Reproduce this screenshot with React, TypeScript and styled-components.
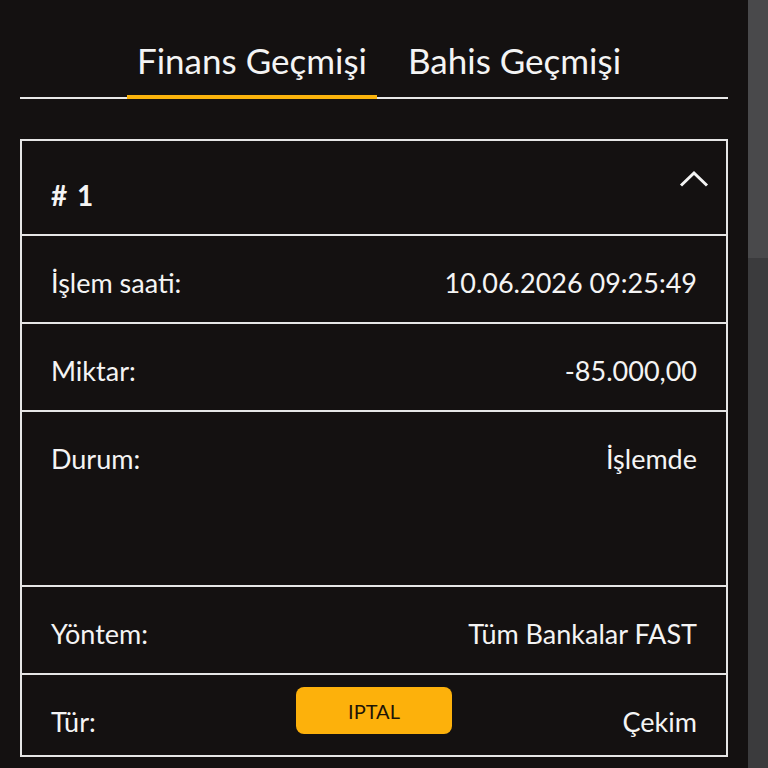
import React from 'react';
import styled, { createGlobalStyle } from 'styled-components';

const GlobalStyle = createGlobalStyle`
  html, body {
    margin: 0;
    padding: 0;
    background: #141111;
    height: 768px;
    overflow: hidden;
  }
  * { box-sizing: border-box; }
`;

const Screen = styled.div`
  display: flex;
  width: 768px;
  height: 768px;
  font-family: Lato, "Open Sans", sans-serif;
  color: #f4f4f4;
`;

const Main = styled.div`
  flex: 1;
  padding: 0 20px;
  display: flex;
  flex-direction: column;
`;

const ScrollTrack = styled.div`
  width: 20px;
  background: #3b3b3d;
  display: flex;
  flex-direction: column;
`;

const ScrollThumb = styled.div`
  height: 258px;
  background: #49494b;
`;

const TabBar = styled.div`
  display: flex;
  justify-content: center;
  gap: 21px;
  padding: 39px 0 0 10px;
  border-bottom: 2px solid #e8e8e8;
`;

const Tab = styled.div<{ active?: boolean }>`
  font-size: 35px;
  line-height: 42px;
  padding: 0 10px 14px;
  border-bottom: 4px solid ${p => (p.active ? '#fbb40c' : 'transparent')};
  margin-bottom: -2px;
`;

const Card = styled.div`
  margin-top: 40px;
  border: 2px solid #e6e6e6;
  display: flex;
  flex-direction: column;
`;

const Row = styled.div<{ minHeight?: number }>`
  display: grid;
  grid-template-columns: 1fr auto 1fr;
  align-items: start;
  min-height: ${p => p.minHeight || 88}px;
  padding: 0 29px;
  font-size: 27px;
  line-height: 33px;
  & + & {
    border-top: 2px solid #e6e6e6;
  }
`;

const Label = styled.div`
  padding-top: 30px;
`;

const Value = styled.div`
  padding-top: 30px;
  text-align: right;
  grid-column: 3;
`;

const Header = styled(Row)`
  min-height: 93px;
  font-size: 28px;
  line-height: 34px;
`;

const HeaderTitle = styled.div`
  padding-top: 37px;
  font-weight: 700;
  word-spacing: 3px;
`;

const Chevron = styled.svg`
  grid-column: 3;
  justify-self: end;
  margin-top: 29px;
  margin-right: -12px;
`;

const CancelButton = styled.button`
  margin-top: 12px;
  width: 156px;
  height: 47px;
  border: none;
  border-radius: 8px;
  background: #fdb10b;
  color: #1d1507;
  font-family: Lato, "Open Sans", sans-serif;
  font-size: 20px;
  cursor: pointer;
`;

type Field = { label: string; value: string; minHeight?: number };

const fields: Field[] = [
  { label: 'İşlem saati:', value: '10.06.2026 09:25:49' },
  { label: 'Miktar:', value: '-85.000,00' },
  { label: 'Durum:', value: 'İşlemde', minHeight: 175 },
  { label: 'Yöntem:', value: 'Tüm Bankalar FAST' },
];

function App() {
  return (
    <Screen>
      <GlobalStyle />
      <Main>
        <TabBar>
          <Tab active>Finans Geçmişi</Tab>
          <Tab>Bahis Geçmişi</Tab>
        </TabBar>
        <Card>
          <Header>
            <HeaderTitle># 1</HeaderTitle>
            <Chevron width="30" height="18" viewBox="0 0 30 18">
              <polyline points="2,15.5 15,3 28,15.5" fill="none" stroke="#f4f4f4" strokeWidth="3" />
            </Chevron>
          </Header>
          {fields.map(f => (
            <Row key={f.label} minHeight={f.minHeight}>
              <Label>{f.label}</Label>
              <Value>{f.value}</Value>
            </Row>
          ))}
          <Row minHeight={82}>
            <Label>Tür:</Label>
            <CancelButton>IPTAL</CancelButton>
            <Value>Çekim</Value>
          </Row>
        </Card>
      </Main>
      <ScrollTrack>
        <ScrollThumb />
      </ScrollTrack>
    </Screen>
  );
}

export default App;
